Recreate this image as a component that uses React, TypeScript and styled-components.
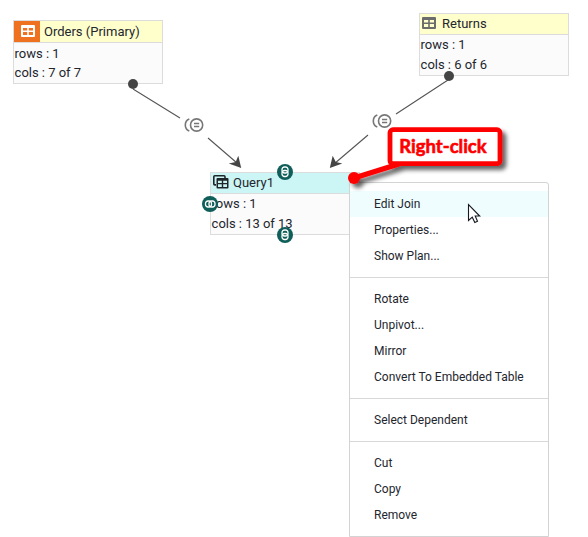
import React from "react";
import styled, { createGlobalStyle } from "styled-components";

const GlobalStyle = createGlobalStyle`
  * { box-sizing: border-box; }
  body { margin: 0; background: #fff; overflow: hidden; }
`;

const Canvas = styled.main`
  position: relative;
  width: 588px;
  height: 537px;
  overflow: hidden;
  background: #fff;
  font-family: Roboto, "Liberation Sans", sans-serif;
  color: #24262e;
`;

const NodeBox = styled.section<{ $x: number; $y: number; $w: number; $h: number }>`
  position: absolute;
  left: ${(p) => p.$x}px;
  top: ${(p) => p.$y}px;
  width: ${(p) => p.$w}px;
  height: ${(p) => p.$h}px;
  display: flex;
  flex-direction: column;
  border: 1px solid #dcdcdc;
  background: #fbfbfc;
  font-size: 13px;
`;

const NodeHeader = styled.header<{ $active?: boolean; $h: number }>`
  display: flex;
  align-items: center;
  flex: none;
  height: ${(p) => p.$h}px;
  border-bottom: 1px solid #dcdcdc;
  background: ${(p) => (p.$active ? "#ccf5f5" : "#ffffcc")};
`;

const IconCell = styled.span<{ $primary?: boolean; $w: number }>`
  display: flex;
  flex: none;
  align-items: center;
  padding-left: ${(p) => (p.$primary ? 7 : 2)}px;
  padding-bottom: ${(p) => (p.$primary ? 1 : 2)}px;
  width: ${(p) => p.$w}px;
  height: 100%;
  background: ${(p) => (p.$primary ? "#ee7220" : "transparent")};
`;

const NodeTitle = styled.span`
  padding-left: 4px;
  line-height: 20px;
`;

const NodeLine = styled.div<{ $h: number }>`
  height: ${(p) => p.$h}px;
  line-height: ${(p) => p.$h}px;
  padding-left: 0.6px;
  letter-spacing: -0.02px;
  white-space: pre;
`;

const Overlay = styled.svg`
  position: absolute;
  inset: 0;
  pointer-events: none;
`;

const Menu = styled.nav`
  position: absolute;
  left: 349px;
  top: 182px;
  width: 200px;
  display: flex;
  flex-direction: column;
  border: 1px solid #d3d3d3;
  border-radius: 3px 3px 0 0;
  background: #fff;
`;

const MenuGroup = styled.div`
  padding: 8px 0;
  & + & { border-top: 1px solid #d8d8d8; }
`;

const MenuItem = styled.div<{ $hover?: boolean }>`
  height: 26px;
  padding-left: 24px;
  font-size: 12px;
  line-height: 26px;
  background: ${(p) => (p.$hover ? "#effdfe" : "transparent")};
`;

const Callout = styled.div`
  position: absolute;
  left: 387px;
  top: 126px;
  width: 112px;
  height: 39px;
  display: flex;
  align-items: center;
  justify-content: center;
  color: #fe0000;
  font: 700 18.5px/28px Lato, sans-serif;
  -webkit-text-stroke: 0.6px #fe0000;
  white-space: nowrap;
`;

const TableIcon = ({ color }: { color: string }) => (
  <svg width="14" height="12" viewBox="0 0 14 12">
    <path
      fill={color}
      fillRule="evenodd"
      d="M1 0H13Q14 0 14 1V11Q14 12 13 12H1Q0 12 0 11V1Q0 0 1 0ZM2 3V5.500H6.200V3ZM7.800 3V5.500H12V3ZM2 7V10H6.200V7ZM7.800 7V10H12V7Z"
    />
  </svg>
);

const QueryIcon = () => (
  <svg width="16" height="14" viewBox="0 0 16 14">
    <path d="M3 9.900H1.800Q.8 9.900 .8 8.900V1.800Q.8.8 1.800.8H11Q12 .8 12 1.800V3" fill="none" stroke="#20252a" strokeWidth="1.600" />
    <path
      fill="#20252a"
      fillRule="evenodd"
      d="M4.500 3H14.500Q15.500 3 15.500 4V12.500Q15.500 13.500 14.500 13.500H4.500Q3.500 13.500 3.500 12.500V4Q3.500 3 4.500 3ZM5 5.700V8H8.800V5.700ZM10.200 5.700V8H14V5.700ZM5 9.300V12H8.800V9.300ZM10.200 9.300V12H14V9.300Z"
    />
  </svg>
);

const JoinBadge = ({ x, y }: { x: number; y: number }) => (
  <g transform={`translate(${x} ${y})`} fill="none" stroke="#777" strokeWidth="1.600">
    <circle r="6.100" />
    <path d="M-2.600 -1.500H2.600M-2.600 1.500H2.600" />
    <path d="M-7.300 -6.100Q-11.300 -4.500 -11.300 0T-7.300 6.100" />
  </g>
);

const Port = ({ x, y, side }: { x: number; y: number; side?: boolean }) => (
  <g transform={`translate(${x} ${y})${side ? " rotate(90)" : ""}`}>
    <circle r="8" fill="#105e59" />
    <g fill="none" stroke="#fff" strokeWidth="1.300">
      <rect x="-3" y="-5" width="6" height="6" rx="2.400" />
      <rect x="-3" y="-1.500" width="6" height="6" rx="2.400" />
    </g>
  </g>
);

const groups = [
  ["Edit Join", "Properties...", "Show Plan..."],
  ["Rotate", "Unpivot...", "Mirror", "Convert To Embedded Table"],
  ["Select Dependent"],
  ["Cut", "Copy", "Remove"],
];

export default function App() {
  return (
    <>
      <GlobalStyle />
      <Canvas>
        <NodeBox $x={13} $y={20} $w={150} $h={64}>
          <NodeHeader $h={22}>
            <IconCell $primary $w={26}><TableIcon color="#fff" /></IconCell>
            <NodeTitle>Orders (Primary)</NodeTitle>
          </NodeHeader>
          <NodeLine $h={21}>rows : 1</NodeLine>
          <NodeLine $h={18}>cols : 7 of 7</NodeLine>
        </NodeBox>
        <NodeBox $x={419} $y={13} $w={150} $h={63}>
          <NodeHeader $h={21}>
            <IconCell $w={18}><TableIcon color="#6c6c6c" /></IconCell>
            <NodeTitle>Returns</NodeTitle>
          </NodeHeader>
          <NodeLine $h={20}>rows : 1</NodeLine>
          <NodeLine $h={20}>cols : 6 of 6</NodeLine>
        </NodeBox>
        <NodeBox $x={210} $y={172} $w={150} $h={63}>
          <NodeHeader $active $h={21}>
            <IconCell $w={18}><QueryIcon /></IconCell>
            <NodeTitle>Query1</NodeTitle>
          </NodeHeader>
          <NodeLine $h={20}>rows : 1</NodeLine>
          <NodeLine $h={20}>cols : 13 of 13</NodeLine>
        </NodeBox>

        <Overlay width="588" height="537">
          <g stroke="#555" strokeWidth="1.100" fill="none">
            <path d="M133 89L180 118M208 138L237 163M448 80L396 114M368 135L334 164" />
          </g>
          <g fill="#444">
            <circle cx="133" cy="84" r="5" />
            <circle cx="449" cy="76" r="5" />
            <path d="M241.200 168L228.800 163.500L235.700 162L238.300 155.700ZM329.800 168L332.700 155.700L335.800 162L342.300 163.500Z" />
          </g>
          <JoinBadge x={196.600} y={125} />
          <JoinBadge x={384.600} y={121} />
          <Port x={285} y={172} />
          <Port x={285} y={235} />
          <Port x={210} y={204} side />
        </Overlay>

        <Menu>
          {groups.map((items, g) => (
            <MenuGroup key={g}>
              {items.map((label) => (
                <MenuItem key={label} $hover={label === "Edit Join"}>{label}</MenuItem>
              ))}
            </MenuGroup>
          ))}
        </Menu>

        <Overlay width="588" height="537">
          <defs>
            <filter id="shadow" x="-10%" y="-10%" width="125%" height="140%">
              <feDropShadow dx="4" dy="4" stdDeviation="2" floodColor="#000" floodOpacity="0.600" />
            </filter>
          </defs>
          <g filter="url(#shadow)">
            <path d="M354 178L402 163" stroke="#fe0000" strokeWidth="5" />
            <circle cx="354" cy="178" r="6" fill="#fe0000" />
            <rect x="390" y="129.700" width="110" height="34" rx="3" fill="#fff" stroke="#fe0000" strokeWidth="4.800" />
          </g>
          <path
            d="M468.500 204.500V220.500L472.300 217.200L474.800 222.500L477.500 221.300L475.200 216H479.700Z"
            fill="#fff"
            stroke="#171722"
            strokeWidth="1.100"
          />
        </Overlay>
        <Callout>Right-click</Callout>
      </Canvas>
    </>
  );
}
